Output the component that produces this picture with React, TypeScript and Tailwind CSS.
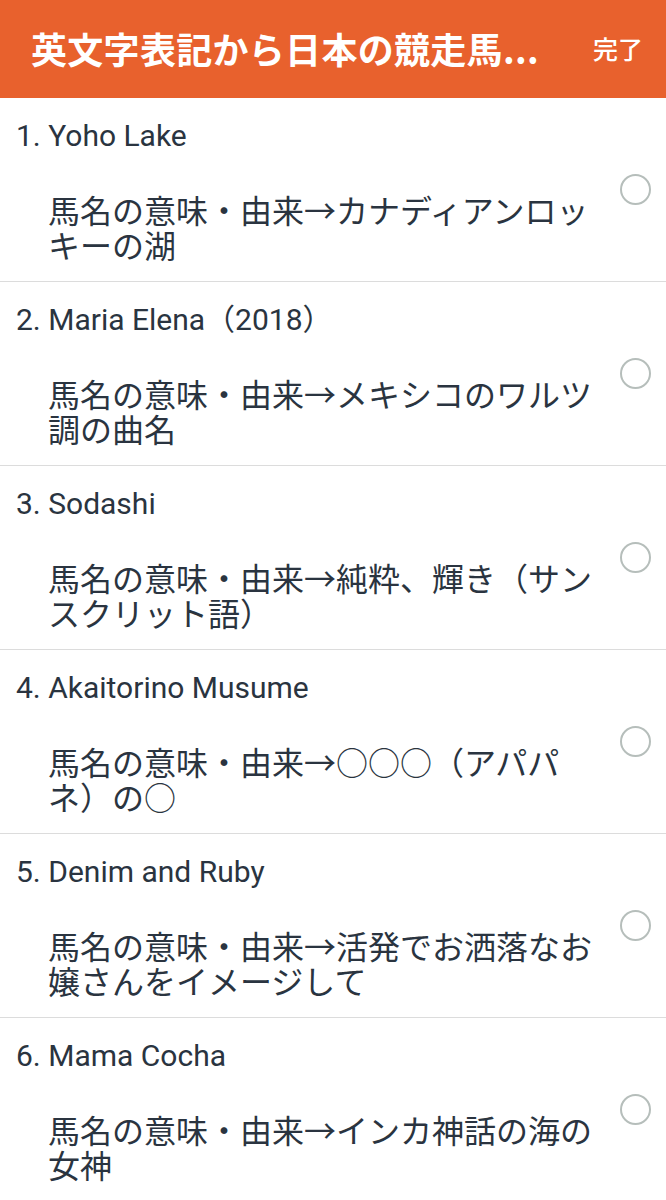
import React from "react";

const items = [
  { t: "1. Yoho Lake", s: "馬名の意味・由来→カナディアンロッキーの湖" },
  { t: "2. Maria Elena（2018）", s: "馬名の意味・由来→メキシコのワルツ調の曲名" },
  { t: "3. Sodashi", s: "馬名の意味・由来→純粋、輝き（サンスクリット語）" },
  { t: "4. Akaitorino Musume", s: "馬名の意味・由来→○○○（アパパネ）の○" },
  { t: "5. Denim and Ruby", s: "馬名の意味・由来→活発でお洒落なお嬢さんをイメージして" },
  { t: "6. Mama Cocha", s: "馬名の意味・由来→インカ神話の海の女神" },
  { t: "7. Daring Tact", s: "馬名の意味・由来→大胆な戦略" },
];

export default function App() {
  return (
    <div
      className="w-[666px] h-[1200px] overflow-hidden bg-white"
      style={{ fontFamily: 'Roboto, "Noto Sans CJK JP", sans-serif' }}
    >
      <div className="h-[98px] bg-[#e8612d] flex items-center justify-between pl-[31px] pr-[23px]">
        <div
          className="text-white text-[36px] font-bold leading-none pb-[2px] tracking-[0.3px]"
          style={{ fontFamily: '"Noto Sans CJK JP", sans-serif' }}
        >
          英文字表記から日本の競走馬...
        </div>
        <div
          className="text-white text-[25px] font-medium leading-none pb-[2px]"
          style={{ fontFamily: '"Noto Sans CJK JP", sans-serif' }}
        >
          完了
        </div>
      </div>
      {items.map((it) => (
        <div key={it.t} className="flex items-center border-b border-[#dcdcdc]">
          <div className="flex-1 pl-4 pt-5 pb-[19px]">
            <div className="text-[30px] leading-[36px] text-[#2a3440]">{it.t}</div>
            <div
              className="mt-[38px] ml-8 w-[548px] text-[32px] leading-[35px] text-[#2a3440]"
              style={{ fontFamily: '"Noto Sans CJK JP", sans-serif' }}
            >
              {it.s}
            </div>
          </div>
          <div className="w-[31px] h-[31px] rounded-full border-[2.5px] border-[#b6bebb] mr-[15px] shrink-0" />
        </div>
      ))}
    </div>
  );
}
